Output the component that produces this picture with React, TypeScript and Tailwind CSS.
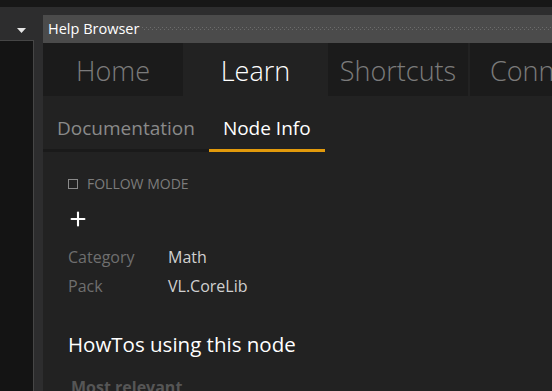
import { Plus } from 'lucide-react'

const MAIN_TABS = [
  { label: 'Home', width: 'w-[140px]', active: false },
  { label: 'Learn', width: 'w-[145px]', active: true },
  { label: 'Shortcuts', width: 'w-[140px]', active: false },
]

const INFO = [
  { key: 'Category', value: 'Math' },
  { key: 'Pack', value: 'VL.CoreLib' },
]

export default function App() {
  return (
    <div
      className="flex h-[391px] w-[552px] flex-col overflow-hidden bg-[#2d2d2e]"
      style={{ fontFamily: '"Open Sans", "Noto Sans", sans-serif' }}
    >
      <div className="h-[7px] shrink-0 bg-[#171717]" />

      <div className="flex min-h-0 flex-1">
        {/* left docked panel */}
        <div className="flex w-[34px] shrink-0 flex-col">
          <div className="flex h-[33px] items-end justify-end pb-[7px] pr-[8px]">
            <svg width="9" height="5" viewBox="0 0 9 5">
              <path d="M0 0 L9 0 L4.5 5 Z" fill="#e6e6e6" />
            </svg>
          </div>
          <div className="flex-1 border-r border-t border-[#464646] bg-[#141414]" />
        </div>

        {/* help browser */}
        <div className="ml-[9px] mt-[8px] flex min-w-0 flex-1 flex-col">
          <div className="flex h-[28px] shrink-0 items-center gap-[3px] bg-[#4b4b4b] pl-[5px]">
            <span className="text-[14.5px] leading-none text-white">Help Browser</span>
            <svg className="h-[4px] flex-1" preserveAspectRatio="none">
              <defs>
                <pattern id="grip" width="4" height="4" patternUnits="userSpaceOnUse">
                  <rect x="0" y="0" width="1" height="1" fill="#6c6c6c" />
                  <rect x="2" y="2" width="1" height="1" fill="#6c6c6c" />
                </pattern>
              </defs>
              <rect width="100%" height="100%" fill="url(#grip)" />
            </svg>
          </div>

          <div className="flex min-h-0 flex-1 flex-col bg-[#222222]">
            {/* main tabs */}
            <div className="flex h-[53px] shrink-0">
              {MAIN_TABS.map((tab) => (
                <div
                  key={tab.label}
                  className={`flex ${tab.width} shrink-0 items-center justify-center pt-[3px] text-[27px] font-light ${
                    tab.active ? 'bg-[#222222] text-white' : 'bg-[#1b1b1b] text-[#7b7b7b]'
                  }`}
                >
                  {tab.label}
                </div>
              ))}
              <div className="ml-[2px] flex flex-1 items-center overflow-hidden bg-[#1b1b1b] pl-[20px] pt-[3px] text-[27px] font-light whitespace-nowrap text-[#7b7b7b]">
                Conn
              </div>
            </div>

            {/* sub tabs */}
            <div className="flex h-[56px] shrink-0 items-end">
              <div className="flex h-[39px] items-start border-b-[3px] border-[#1a1a1a] px-[14px] pt-[2px] text-[19px] leading-[26px] text-[#8a8a8a]">
                Documentation
              </div>
              <div className="flex h-[39px] items-start border-b-[3px] border-[#e29a0c] px-[14px] pt-[2px] text-[19px] leading-[26px] text-white">
                Node Info
              </div>
            </div>

            <div className="flex flex-col pl-[25px]">
              <div className="mt-[25px] flex items-center gap-[9px]">
                <div className="h-[10px] w-[10px] border border-[#8a8a8a]" />
                <span className="text-[14px] leading-none text-[#7c7c7c]">FOLLOW MODE</span>
              </div>

              <Plus className="-ml-[1px] mt-[17px] h-[22px] w-[22px] text-white" strokeWidth={2.3} />

              <div className="mt-[12px] flex flex-col">
                {INFO.map((row) => (
                  <div key={row.key} className="flex h-[29px] items-center text-[16px]">
                    <span className="w-[100px] text-[#6f6f6f]">{row.key}</span>
                    <span className="text-[#d0d0d0]">{row.value}</span>
                  </div>
                ))}
              </div>

              <div className="mt-[29px] text-[20.5px] text-white">HowTos using this node</div>
              <div className="mt-[15px] pl-[3px] text-[16px] leading-[24px] font-bold text-[#565656]">
                Most relevant
              </div>
            </div>
          </div>
        </div>
      </div>
    </div>
  )
}
